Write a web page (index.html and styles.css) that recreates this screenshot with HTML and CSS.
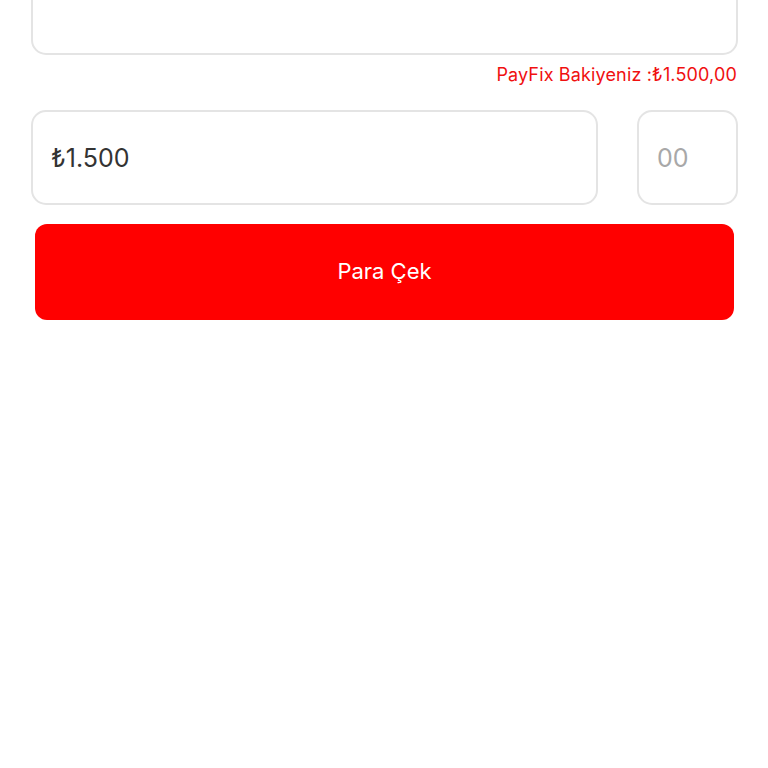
FILE: index.html
```html
<!DOCTYPE html>
<html lang="tr">
<head>
<meta charset="utf-8">
<link rel="stylesheet" href="styles.css">
</head>
<body>
<div class="page">
  <div class="top-card"></div>
  <div class="balance">PayFix Bakiyeniz :₺1.500,00</div>
  <div class="amount-row">
    <div class="field field-main"><span class="value">₺1.500</span></div>
    <div class="field field-cents"><span class="placeholder">00</span></div>
  </div>
  <button class="submit">Para Çek</button>
</div>
</body>
</html>
```

FILE: styles.css
```css
html, body {
  margin: 0;
  padding: 0;
  background: #ffffff;
  font-family: "Inter", "Roboto", "Liberation Sans", sans-serif;
}
.page {
  padding: 0 30px 0 31px;
  display: flex;
  flex-direction: column;
}
.top-card {
  margin-top: -30px;
  height: 81px;
  border: 2px solid #e4e4e4;
  border-radius: 15px;
}
.balance {
  margin-top: 8px;
  text-align: right;
  color: #f01010;
  font-size: 18px;
  letter-spacing: 0.15px;
  line-height: 24px;
  padding-right: 1px;
}
.amount-row {
  margin-top: 23px;
  display: flex;
  gap: 39px;
}
.field {
  border: 2px solid #e4e4e4;
  border-radius: 15px;
  display: flex;
  align-items: center;
  padding-left: 18px;
  box-sizing: border-box;
  height: 95px;
}
.field-main {
  flex: 1;
}
.field-cents {
  width: 101px;
}
.value {
  font-size: 25px;
  color: #333333;
}
.placeholder {
  font-size: 25px;
  color: #a8a8a8;
}
.submit {
  margin: 19px 4px 0 4px;
  height: 96px;
  border: none;
  border-radius: 12px;
  background: #ff0000;
  color: #ffffff;
  font-family: "Inter", "Roboto", "Liberation Sans", sans-serif;
  font-size: 22px;
  padding-bottom: 4px;
}
```
